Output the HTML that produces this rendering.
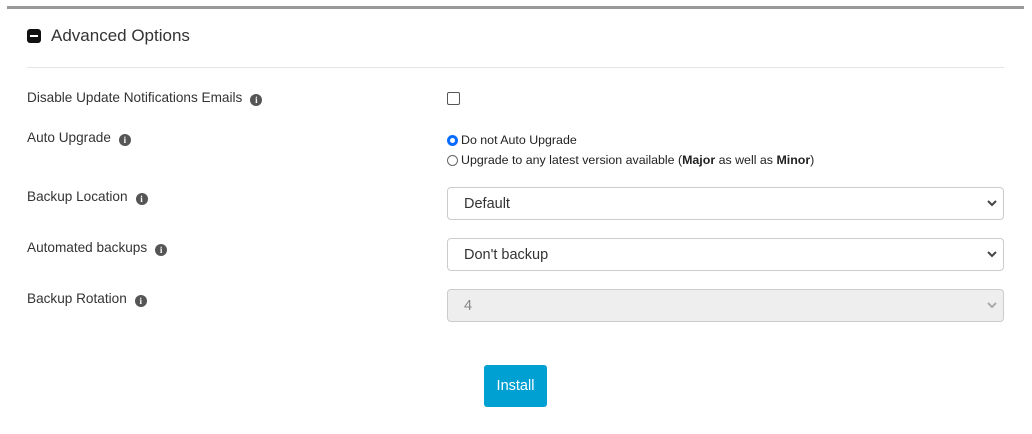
<!DOCTYPE html>
<html><head><style>
body{margin:0;width:1032px;height:434px;background:#fff;font-family:"Liberation Sans",sans-serif;color:#333;position:relative;overflow:hidden}
.a{position:absolute}
.lbl{position:absolute;left:27px;font-size:13.6px;color:#333}
.i{display:inline-block;width:12px;height:12px;border-radius:50%;background:#555;color:#fff;font:bold 9px "Liberation Serif",serif;text-align:center;line-height:12px;vertical-align:-1px;margin-left:8px}
.sel{position:absolute;left:447px;width:555px;height:31px;border:1px solid #ccc;border-radius:4px;font-size:14.5px;line-height:33px;text-indent:16px;color:#333}
.sel svg{position:absolute;right:6px;top:12px}
.radio{display:inline-block;width:11px;height:11px;border:1px solid #666;border-radius:50%;vertical-align:-2px;margin-right:3px;box-sizing:border-box}
</style></head><body>
<div class="a" style="left:7px;top:6px;width:1017px;height:3px;background:#999"></div>
<div class="a" style="left:27px;top:29px;width:14px;height:14px;background:#111;border-radius:3px"><div style="position:absolute;left:3px;top:6px;width:8px;height:2px;background:#fff"></div></div>
<div class="a" style="left:51px;top:26px;font-size:17px;color:#333">Advanced Options</div>
<div class="a" style="left:27px;top:67px;width:977px;height:1px;background:#e5e5e5"></div>
<div class="lbl" style="top:90px">Disable Update Notifications Emails<span class="i">i</span></div>
<div class="a" style="left:447px;top:92px;width:11px;height:11px;border:1px solid #555;border-radius:2px"></div>
<div class="lbl" style="top:130px">Auto Upgrade<span class="i">i</span></div>
<div class="a" style="left:447px;top:133px;font-size:12.4px;color:#222"><span class="radio" style="border:3px solid #0a6cff"></span>Do not Auto Upgrade</div>
<div class="a" style="left:447px;top:153px;font-size:12.4px;color:#222"><span class="radio"></span>Upgrade to any latest version available (<b>Major</b> as well as <b>Minor</b>)</div>
<div class="lbl" style="top:189px">Backup Location<span class="i">i</span></div>
<div class="sel" style="top:187px">Default<svg width="10" height="7"><path d="M1 1L5 5L9 1" stroke="#444" stroke-width="2" fill="none"/></svg></div>
<div class="lbl" style="top:240px">Automated backups<span class="i">i</span></div>
<div class="sel" style="top:238px">Don't backup<svg width="10" height="7"><path d="M1 1L5 5L9 1" stroke="#444" stroke-width="2" fill="none"/></svg></div>
<div class="lbl" style="top:291px">Backup Rotation<span class="i">i</span></div>
<div class="sel" style="top:289px;background:#eee;color:#888">4<svg width="10" height="7"><path d="M1 1L5 5L9 1" stroke="#aaa" stroke-width="2" fill="none"/></svg></div>
<div class="a" style="left:484px;top:365px;width:63px;height:42px;background:#00a0d2;border-radius:3px;color:#fff;font-size:14.5px;text-align:center;line-height:43px">Install</div>
</body></html>
